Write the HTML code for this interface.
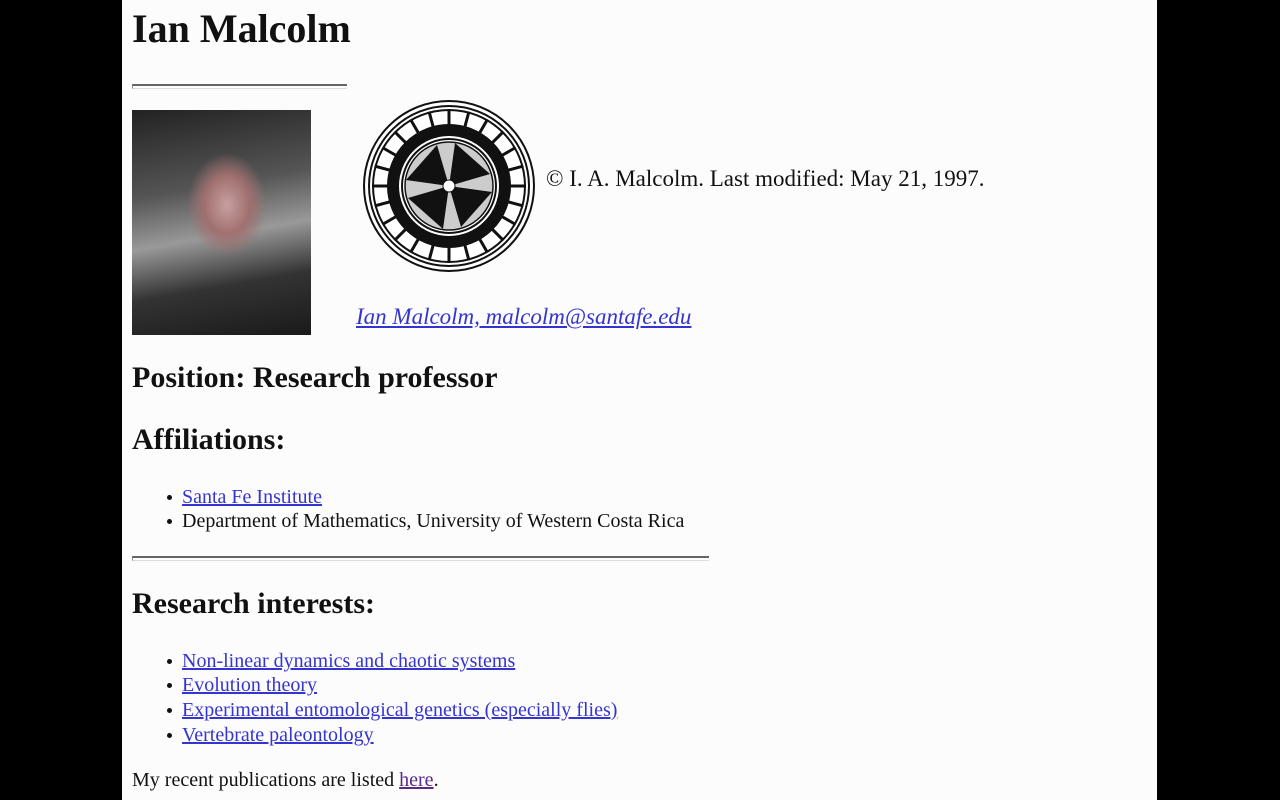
<!DOCTYPE html>
<html><head><meta charset="utf-8"><style>
html,body{margin:0;padding:0;background:#000;width:1280px;height:800px;overflow:hidden}
#pg{position:absolute;left:122px;top:0;width:1035px;height:800px;background:#fdfcfd;font-family:"Liberation Serif",serif;color:#111}
.a{position:absolute;white-space:nowrap;line-height:1}
a{color:#3434d0;text-decoration:underline}
a.v{color:#5a2a8a}
.hr{position:absolute;border-top:2px solid #666;border-bottom:1px solid #ddd;border-left:1px solid #888;height:2px}
.b{position:absolute;width:5px;height:5px;border-radius:50%;background:#111}
</style></head><body><div id="pg">
<div class="a" style="left:10px;top:9px;font-size:40px;font-weight:bold">Ian Malcolm</div>
<div class="hr" style="left:10px;top:84px;width:214px"></div>
<div style="position:absolute;left:10px;top:110px;width:179px;height:225px;background:radial-gradient(ellipse 50px 65px at 95px 95px,#c9a0a0 0%,#a07070 45%,transparent 80%),linear-gradient(170deg,#222 0%,#555 35%,#999 55%,#333 75%,#1a1a1a 100%)"></div>
<svg style="position:absolute;left:240px;top:98px" width="174" height="176" viewBox="-87 -88 174 176">
<circle r="85" fill="#fff" stroke="#111" stroke-width="2"/>
<circle r="80" fill="none" stroke="#111" stroke-width="2"/>
<circle r="76" fill="#fff" stroke="#111" stroke-width="2"/>
<circle r="56" fill="none" stroke="#111" stroke-width="12"/>
<g stroke="#111" stroke-width="3">
<line x1="0" y1="-50" x2="0" y2="-77" transform="rotate(0)"/><line x1="0" y1="-50" x2="0" y2="-77" transform="rotate(15)"/><line x1="0" y1="-50" x2="0" y2="-77" transform="rotate(30)"/><line x1="0" y1="-50" x2="0" y2="-77" transform="rotate(45)"/><line x1="0" y1="-50" x2="0" y2="-77" transform="rotate(60)"/><line x1="0" y1="-50" x2="0" y2="-77" transform="rotate(75)"/><line x1="0" y1="-50" x2="0" y2="-77" transform="rotate(90)"/><line x1="0" y1="-50" x2="0" y2="-77" transform="rotate(105)"/><line x1="0" y1="-50" x2="0" y2="-77" transform="rotate(120)"/><line x1="0" y1="-50" x2="0" y2="-77" transform="rotate(135)"/><line x1="0" y1="-50" x2="0" y2="-77" transform="rotate(150)"/><line x1="0" y1="-50" x2="0" y2="-77" transform="rotate(165)"/><line x1="0" y1="-50" x2="0" y2="-77" transform="rotate(180)"/><line x1="0" y1="-50" x2="0" y2="-77" transform="rotate(195)"/><line x1="0" y1="-50" x2="0" y2="-77" transform="rotate(210)"/><line x1="0" y1="-50" x2="0" y2="-77" transform="rotate(225)"/><line x1="0" y1="-50" x2="0" y2="-77" transform="rotate(240)"/><line x1="0" y1="-50" x2="0" y2="-77" transform="rotate(255)"/><line x1="0" y1="-50" x2="0" y2="-77" transform="rotate(270)"/><line x1="0" y1="-50" x2="0" y2="-77" transform="rotate(285)"/><line x1="0" y1="-50" x2="0" y2="-77" transform="rotate(300)"/><line x1="0" y1="-50" x2="0" y2="-77" transform="rotate(315)"/><line x1="0" y1="-50" x2="0" y2="-77" transform="rotate(330)"/><line x1="0" y1="-50" x2="0" y2="-77" transform="rotate(345)"/>
</g>
<circle r="47" fill="#fff" stroke="#111" stroke-width="2"/>
<circle r="44" fill="#ccc" stroke="#111" stroke-width="1.5"/>
<g fill="#111">
<path d="M0 0 L-43 -6 L-12 -41 Z"/>
<path d="M0 0 L-43 -6 L-12 -41 Z" transform="rotate(90)"/>
<path d="M0 0 L-43 -6 L-12 -41 Z" transform="rotate(180)"/>
<path d="M0 0 L-43 -6 L-12 -41 Z" transform="rotate(270)"/>
</g>
<circle r="6" fill="#fff" stroke="#111" stroke-width="1"/>
</svg>
<div class="a" style="left:424px;top:167px;font-size:23px">© I. A. Malcolm. Last modified: May 21, 1997.</div>
<div class="a" style="left:234px;top:305px;font-size:23px;font-style:italic"><a>Ian Malcolm, malcolm@santafe.edu</a></div>
<div class="a" style="left:10px;top:363px;font-size:30px;font-weight:bold">Position: Research professor</div>
<div class="a" style="left:10px;top:425px;font-size:30px;font-weight:bold">Affiliations:</div>
<div class="b" style="left:45px;top:495px"></div>
<div class="a" style="left:60px;top:487px;font-size:20px"><a>Santa Fe Institute</a></div>
<div class="b" style="left:45px;top:519px"></div>
<div class="a" style="left:60px;top:511px;font-size:20px">Department of Mathematics, University of Western Costa Rica</div>
<div class="hr" style="left:10px;top:556px;width:576px"></div>
<div class="a" style="left:10px;top:589px;font-size:30px;font-weight:bold">Research interests:</div>
<div class="b" style="left:45px;top:659px"></div>
<div class="a" style="left:60px;top:651px;font-size:20px"><a>Non-linear dynamics and chaotic systems</a></div>
<div class="b" style="left:45px;top:683px"></div>
<div class="a" style="left:60px;top:675px;font-size:20px"><a>Evolution theory</a></div>
<div class="b" style="left:45px;top:708px"></div>
<div class="a" style="left:60px;top:700px;font-size:20px"><a>Experimental entomological genetics (especially flies)</a></div>
<div class="b" style="left:45px;top:733px"></div>
<div class="a" style="left:60px;top:725px;font-size:20px"><a>Vertebrate paleontology</a></div>
<div class="a" style="left:10px;top:770px;font-size:20px">My recent publications are listed <a class="v">here</a>.</div>
</div></body></html>
